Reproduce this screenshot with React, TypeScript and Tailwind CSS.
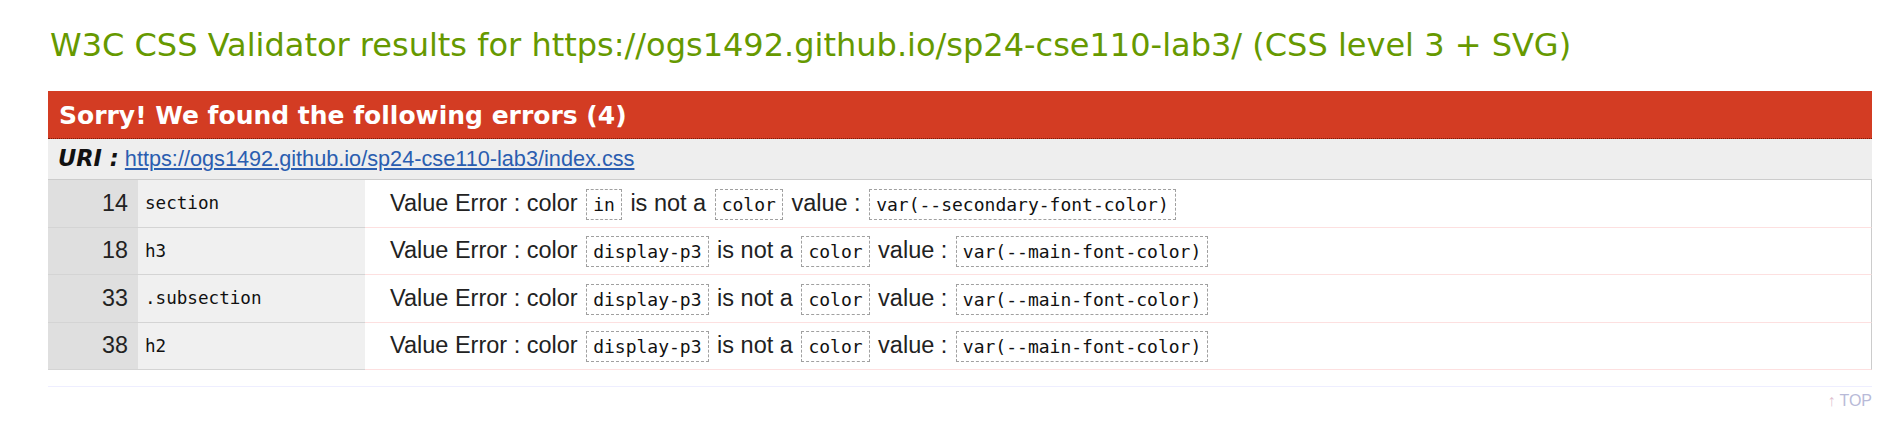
import React from "react";

const mono = { fontFamily: '"DejaVu Sans Mono", "Liberation Mono", monospace' };

function Box({ children }: { children: React.ReactNode }) {
  return (
    <span
      className="inline-block border border-dashed border-[#a0a0a0] px-[6px] py-[4px] mx-[2px] text-[18px] leading-[21px] text-[#111] bg-white align-middle"
      style={mono}
    >
      {children}
    </span>
  );
}

const rows = [
  { line: "14", sel: "section", v: "in", val: "var(--secondary-font-color)" },
  { line: "18", sel: "h3", v: "display-p3", val: "var(--main-font-color)" },
  { line: "33", sel: ".subsection", v: "display-p3", val: "var(--main-font-color)" },
  { line: "38", sel: "h2", v: "display-p3", val: "var(--main-font-color)" },
];

export default function App() {
  return (
    <div className="w-[1903px] h-[433px] bg-white overflow-hidden" style={{ fontFamily: '"Liberation Sans", Arial, sans-serif' }}>
      <div className="ml-[48px] w-[1824px]">
        <h2
          className="pt-[25px] ml-[2px] text-[32px] leading-[40px] text-[#669900] whitespace-nowrap"
          style={{ fontFamily: '"DejaVu Sans", Verdana, sans-serif' }}
        >
          W3C CSS Validator results for https://ogs1492.github.io/sp24-cse110-lab3/ (CSS level 3 + SVG)
        </h2>
        <div
          className="mt-[26px] bg-[#d33c23] border-b border-dotted border-[#7a1a0a] pl-[11px] pt-[2px] h-[48px] leading-[45px] text-[25px] font-bold text-white"
          style={{ fontFamily: '"DejaVu Sans", Verdana, sans-serif' }}
        >
          Sorry! We found the following errors (4)
        </div>
        <div className="bg-[#eeeeee] h-[41px] border-b border-[#cccccc] pl-[10px] flex items-center text-[21.7px] text-[#111]">
          <span className="whitespace-pre">
            <span className="font-bold italic text-[22.5px]" style={{ fontFamily: '"DejaVu Sans", Verdana, sans-serif' }}>URI :</span>{" "}
            <span className="text-[#2a5db0] underline">https://ogs1492.github.io/sp24-cse110-lab3/index.css</span>
          </span>
        </div>
        {rows.map((r) => (
          <div key={r.line} className="flex h-[47.5px]">
            <div className="w-[90px] shrink-0 bg-[#dfdfdf] border-b border-[#d4d4d4] flex items-center justify-end pr-[10px] text-[23.3px] text-[#222]">
              {r.line}
            </div>
            <div
              className="w-[227px] shrink-0 bg-[#f0f0f0] border-b border-[#d4d4d4] flex items-center pl-[7px] text-[17.6px] text-[#111]"
              style={mono}
            >
              {r.sel}
            </div>
            <div className="flex-1 bg-white border-b border-b-[#fde0e0] border-r border-r-[#cccccc] flex items-center pl-[25px] text-[23.5px] text-[#222] whitespace-nowrap">
              <span>
                Value Error : color <Box>{r.v}</Box> is not a <Box>color</Box> value : <Box>{r.val}</Box>
              </span>
            </div>
          </div>
        ))}
        <div className="mt-[16px] border-t border-[#eeeeff]" />
        <div className="flex justify-end pt-[4px] text-[16px] leading-[20px]">
          <span className="text-[#e0bfd0] mr-[4px]">↑</span>
          <span className="text-[#b8bad8]">TOP</span>
        </div>
      </div>
    </div>
  );
}
